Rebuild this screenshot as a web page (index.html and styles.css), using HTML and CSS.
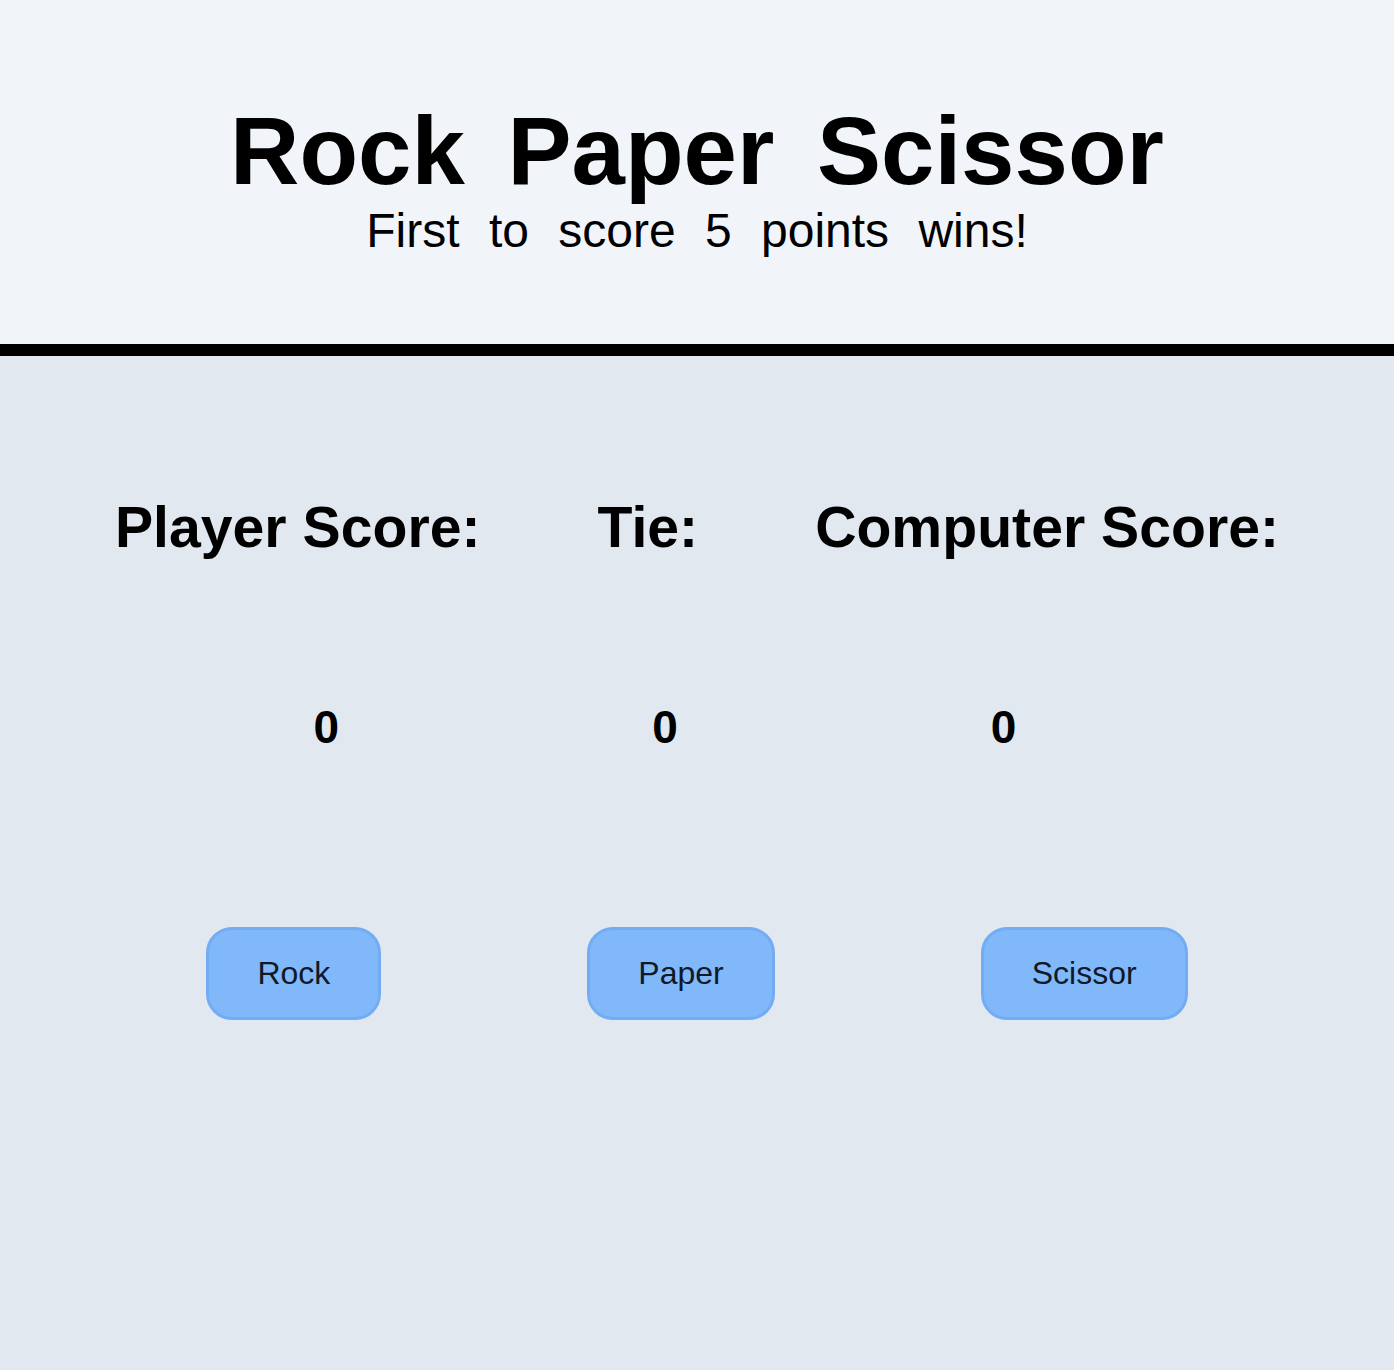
FILE: index.html
```html
<!DOCTYPE html>
<html lang="en">
<head>
<meta charset="utf-8">
<title>Rock Paper Scissor</title>
<link rel="stylesheet" href="styles.css">
</head>
<body>
<header class="header">
  <h1 class="title">Rock Paper Scissor</h1>
  <p class="subtitle">First to score 5 points wins!</p>
</header>
<main class="main">
  <div class="labels">
    <h2 class="label">Player Score:</h2>
    <h2 class="label">Tie:</h2>
    <h2 class="label">Computer Score:</h2>
  </div>
  <div class="scores">
    <span class="score">0</span>
    <span class="score">0</span>
    <span class="score">0</span>
  </div>
  <div class="buttons">
    <button class="btn">Rock</button>
    <button class="btn">Paper</button>
    <button class="btn">Scissor</button>
  </div>
</main>
</body>
</html>
```

FILE: styles.css
```css
* { box-sizing: border-box; }
html, body { margin: 0; padding: 0; }
body {
  font-family: "Liberation Sans", Arial, sans-serif;
  color: #000;
  background: #e2e8f0;
  min-height: 1370px;
}
.header {
  background: #f1f5f9;
  height: 356px;
  border-bottom: 12px solid #000;
  display: flex;
  flex-direction: column;
  align-items: center;
  padding-top: 103px;
}
.title {
  margin: 0;
  font-size: 96px;
  font-weight: 700;
  line-height: 1;
  word-spacing: 16px;
}
.subtitle {
  margin: 8px 0 0;
  font-size: 48px;
  line-height: 1;
  word-spacing: 16px;
}
.main {
  display: flex;
  flex-direction: column;
  padding-top: 139px;
}
.labels {
  display: flex;
  justify-content: center;
  gap: 117px;
}
.label {
  margin: 0;
  font-size: 57.2px;
  font-weight: 700;
  line-height: 1.15;
}
.scores {
  display: flex;
  justify-content: center;
  gap: 313px;
  padding-right: 64px;
  margin-top: 140px;
}
.score {
  font-size: 46px;
  font-weight: 700;
  line-height: 1.15;
}
.buttons {
  display: flex;
  justify-content: center;
  gap: 206px;
  margin-top: 173px;
}
.btn {
  font-family: "Liberation Sans", Arial, sans-serif;
  font-size: 32px;
  line-height: 1.15;
  color: #111827;
  background: #80b8fa;
  border: 3px solid #74acf3;
  border-radius: 26px;
  padding: 25px 48px 26px;
}
```
